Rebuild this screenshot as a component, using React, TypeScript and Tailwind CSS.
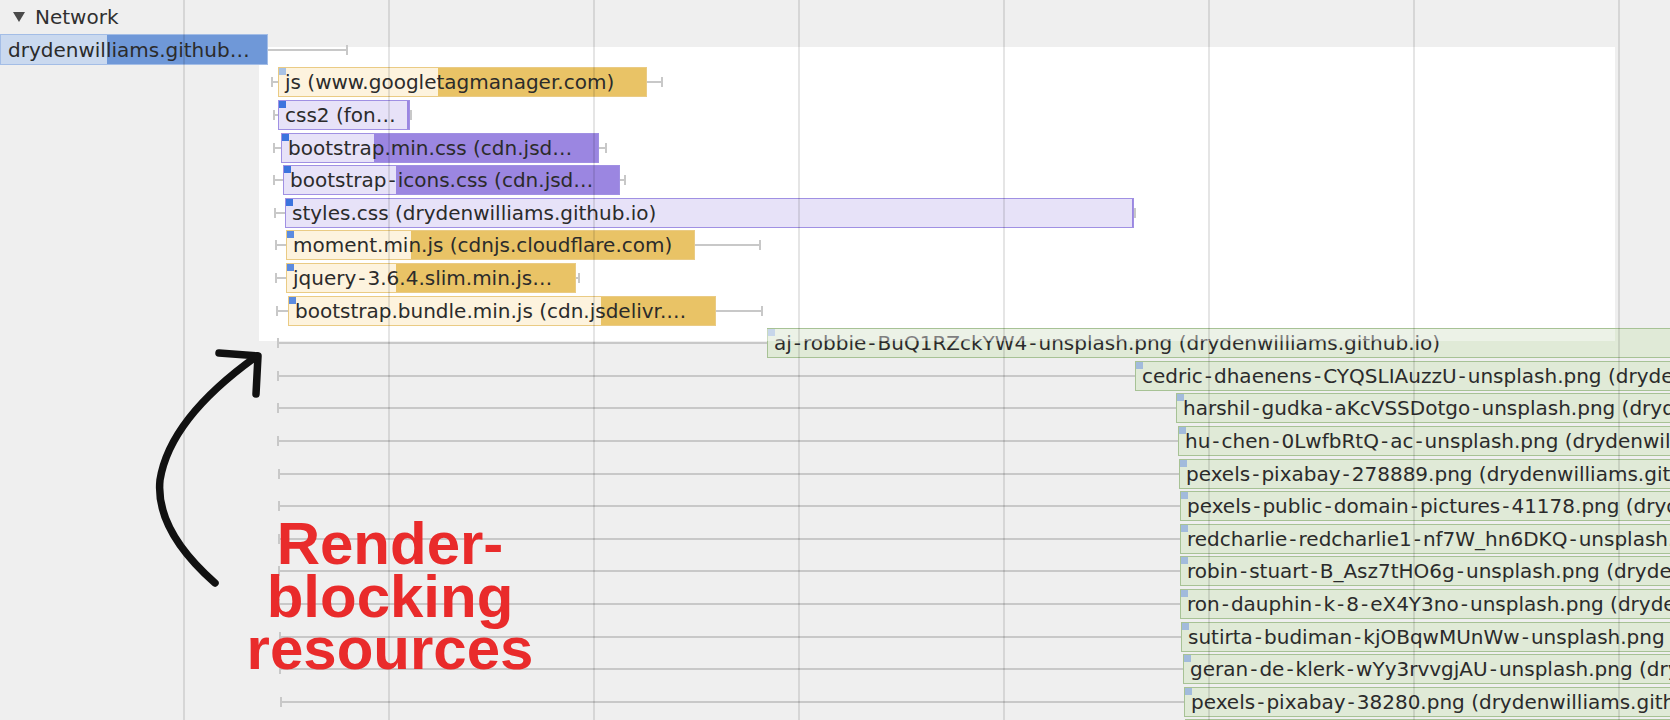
import React from "react";

type Kind = "doc" | "script" | "css" | "img";
type Sq = "light" | "dark" | "mid" | "img";

interface Row {
  label: string;
  kind: Kind;
  ws?: number;
  start: number;
  split?: number;
  end: number;
  we?: number;
  sq?: Sq;
}

const barCls: Record<Kind, string> = {
  doc: "bg-[#6f98d8] border-[#a3bde6]",
  script: "bg-[#e9c366] border-[#eacb84]",
  css: "bg-[#9b86e1] border-[#a090e3]",
  img: "bg-[#e0ead7] border-[#a7c295]",
};

const lightCls: Record<Kind, string> = {
  doc: "bg-[#cad9ef]",
  script: "bg-[#fdf3de]",
  css: "bg-[#e7e2f8]",
  img: "bg-[#e0ead7]",
};

const sqCls: Record<Sq, string> = {
  light: "bg-[#a8c2e5]",
  dark: "bg-[#3c74de]",
  mid: "bg-[#5b8be0]",
  img: "bg-[#a2bbdc]",
};

const FAR = 1760;

const rows: Row[] = [
  { label: "drydenwilliams.github…", kind: "doc", start: 0, split: 106, end: 268, we: 348 },
  { label: "js (www.googletagmanager.com)", kind: "script", ws: 271, start: 278, split: 437, end: 647, we: 663, sq: "light" },
  { label: "css2 (fon…", kind: "css", ws: 273, start: 278, split: 406, end: 410, we: 412, sq: "dark" },
  { label: "bootstrap.min.css (cdn.jsd…", kind: "css", ws: 273, start: 281, split: 373, end: 599, we: 607, sq: "dark" },
  { label: "bootstrap-icons.css (cdn.jsd…", kind: "css", ws: 273, start: 283, split: 395, end: 620, we: 626, sq: "dark" },
  { label: "styles.css (drydenwilliams.github.io)", kind: "css", ws: 274, start: 285, split: 1131, end: 1134, we: 1136, sq: "dark" },
  { label: "moment.min.js (cdnjs.cloudflare.com)", kind: "script", ws: 275, start: 286, split: 410, end: 695, we: 761, sq: "mid" },
  { label: "jquery-3.6.4.slim.min.js…", kind: "script", ws: 275, start: 286, split: 395, end: 576, we: 580, sq: "mid" },
  { label: "bootstrap.bundle.min.js (cdn.jsdelivr.…", kind: "script", ws: 276, start: 288, split: 600, end: 716, we: 763, sq: "mid" },
  { label: "aj-robbie-BuQ1RZckYW4-unsplash.png (drydenwilliams.github.io)", kind: "img", ws: 277, start: 767, end: FAR, sq: "img" },
  { label: "cedric-dhaenens-CYQSLIAuzzU-unsplash.png (drydenwilliams.github.io)", kind: "img", ws: 277, start: 1135, end: FAR, sq: "img" },
  { label: "harshil-gudka-aKcVSSDotgo-unsplash.png (drydenwilliams.github.io)", kind: "img", ws: 277, start: 1176, end: FAR, sq: "img" },
  { label: "hu-chen-0LwfbRtQ-ac-unsplash.png (drydenwilliams.github.io)", kind: "img", ws: 277, start: 1178, end: FAR, sq: "img" },
  { label: "pexels-pixabay-278889.png (drydenwilliams.github.io)", kind: "img", ws: 278, start: 1179, end: FAR, sq: "img" },
  { label: "pexels-public-domain-pictures-41178.png (drydenwilliams.github.io)", kind: "img", ws: 278, start: 1180, end: FAR, sq: "img" },
  { label: "redcharlie-redcharlie1-nf7W_hn6DKQ-unsplash.png (drydenwilliams.github.io)", kind: "img", ws: 278, start: 1180, end: FAR, sq: "img" },
  { label: "robin-stuart-B_Asz7tHO6g-unsplash.png (drydenwilliams.github.io)", kind: "img", ws: 278, start: 1180, end: FAR, sq: "img" },
  { label: "ron-dauphin-k-8-eX4Y3no-unsplash.png (drydenwilliams.github.io)", kind: "img", ws: 278, start: 1180, end: FAR, sq: "img" },
  { label: "sutirta-budiman-kjOBqwMUnWw-unsplash.png (drydenwilliams.github.io)", kind: "img", ws: 279, start: 1181, end: FAR, sq: "img" },
  { label: "geran-de-klerk-wYy3rvvgjAU-unsplash.png (drydenwilliams.github.io)", kind: "img", ws: 279, start: 1183, end: FAR, sq: "img" },
  { label: "pexels-pixabay-38280.png (drydenwilliams.github.io)", kind: "img", ws: 280, start: 1184, end: FAR, sq: "img" },
  { label: "", kind: "img", ws: 280, start: 1185, end: FAR, sq: "img" },
];

function Label({ text }: { text: string }) {
  const parts = text.split("-");
  return (
    <>
      {parts.map((p, i) => (
        <React.Fragment key={i}>
          {i > 0 ? <span className="mx-[2px]">-</span> : null}
          {p}
        </React.Fragment>
      ))}
    </>
  );
}

function Bar({ r }: { r: Row }) {
  const width = r.end - r.start;
  const lightW = (r.split ?? r.end) - r.start;
  const isDoc = r.kind === "doc";
  return (
    <div className="flex items-center shrink-0">
      {r.ws !== undefined ? (
        <>
          <div className="shrink-0" style={{ width: r.ws }} />
          <div className="w-[2px] h-[10px] bg-[#c8c8c8] shrink-0" />
          <div className="h-[2px] bg-[#c8c8c8] shrink-0" style={{ width: r.start - r.ws - 2 }} />
        </>
      ) : null}
      <div
        className={`relative shrink-0 border overflow-hidden flex items-center ${isDoc ? "h-[31px]" : "h-[30px]"} ${barCls[r.kind]}`}
        style={{ width }}
      >
        <div className={`absolute left-0 top-0 bottom-0 ${lightCls[r.kind]}`} style={{ width: lightW }} />
        {r.sq ? <div className={`absolute left-0 top-0 w-[7px] h-[7px] ${sqCls[r.sq]}`} /> : null}
        <span className={`relative whitespace-nowrap text-[#2b2b2b] ${isDoc ? "pl-[7px]" : "pl-[6px]"}`}>
          <Label text={r.label} />
        </span>
      </div>
      {r.we !== undefined && r.we > r.end + 1 ? (
        <>
          <div className="h-[2px] bg-[#c8c8c8] shrink-0" style={{ width: Math.max(r.we - r.end - 2, 0) }} />
          <div className="w-[2px] h-[10px] bg-[#c8c8c8] shrink-0" />
        </>
      ) : null}
    </div>
  );
}

export default function App() {
  return (
    <div className="relative w-[1670px] h-[720px] overflow-hidden bg-[#efefef] font-['DejaVu_Sans',sans-serif] text-[20px] text-[#2b2b2b]">
      {/* highlight panel (annotation) */}
      <div className="absolute left-[259px] top-[47px] w-[1356px] h-[294px] bg-white" />

      {/* waterfall rows */}
      <div className="relative flex flex-col pt-[1px]">
        <div className="flex items-center h-[32.6px] pl-[13px] gap-[10px] text-[#303030]">
          <svg width="12" height="10" viewBox="0 0 12 10" className="shrink-0">
            <polygon points="0,0 12,0 6,10" fill="#4a4a4a" />
          </svg>
          <span>Network</span>
        </div>
        {rows.map((r, i) => (
          <div key={i} className="flex items-center h-[32.6px]">
            <Bar r={r} />
          </div>
        ))}
      </div>

      {/* the highlight panel's lower edge washes over the top of the first image bar */}
      <div className="absolute left-[767px] top-[329px] w-[848px] h-[12px] bg-white/40 pointer-events-none" />

      {/* grid lines */}
      <div className="absolute inset-0 flex pl-[183px] gap-[203px] pointer-events-none">
        {Array.from({ length: 8 }).map((_, i) => (
          <div key={i} className="w-[2px] h-full bg-black/[0.1] shrink-0" />
        ))}
      </div>

      {/* arrow annotation */}
      <svg
        className="absolute left-[130px] top-[330px] pointer-events-none"
        width="160"
        height="280"
        viewBox="130 330 160 280"
      >
        <path
          d="M215 583 Q155 530 160 480 Q170 418 257 356"
          fill="none"
          stroke="#111"
          strokeWidth="7.5"
          strokeLinecap="round"
        />
        <path
          d="M219 353 L258 356 L256 394"
          fill="none"
          stroke="#111"
          strokeWidth="7.5"
          strokeLinecap="round"
          strokeLinejoin="round"
        />
      </svg>

      {/* label annotation */}
      <div className="absolute left-[200px] top-[518px] w-[380px] text-center font-['Liberation_Sans',Arial,sans-serif] font-bold text-[60px] leading-[52.5px] text-[#e92b2b] pointer-events-none">
        <div>Render-</div>
        <div>blocking</div>
        <div>resources</div>
      </div>
    </div>
  );
}
